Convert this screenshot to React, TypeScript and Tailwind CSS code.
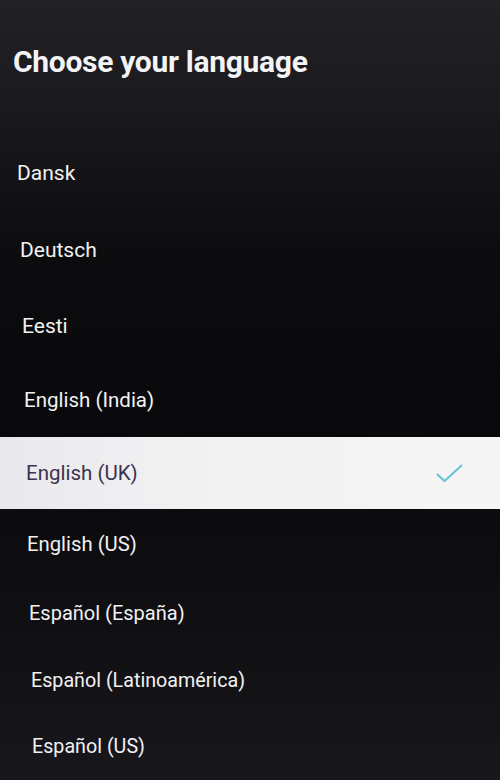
import React from "react";

type Lang = {
  label: string;
  row: string;
  selected?: boolean;
};

// rows get a little shorter and more indented toward the bottom
const languages: Lang[] = [
  { label: "Dansk", row: "h-[78px] pl-[17px] text-[21px]" },
  { label: "Deutsch", row: "h-[76px] pl-[20px] text-[21px]" },
  { label: "Eesti", row: "h-[75px] pl-[22px] text-[21px]" },
  { label: "English (India)", row: "h-[74px] pl-[24px] text-[20.5px]" },
  { label: "English (UK)", row: "h-[72px] pl-[26px] text-[20.5px]", selected: true },
  { label: "English (US)", row: "h-[69px] pl-[27px] text-[20.3px]" },
  { label: "Español (España)", row: "h-[69px] pl-[29px] text-[20px]" },
  { label: "Español (Latinoamérica)", row: "h-[67px] pl-[31px] text-[19.7px]" },
  { label: "Español (US)", row: "h-[65px] pl-[32px] text-[19.7px]" },
];

const Check = () => (
  <svg width="27" height="19" viewBox="0 0 27 19" fill="none">
    <path d="M1.5 10.5 L8.5 17 L25.5 1.5" stroke="#63c3d6" strokeWidth="2" strokeLinecap="round" strokeLinejoin="round" />
  </svg>
);

const App = () => {
  return (
    <div className="w-[500px] h-[780px] overflow-hidden bg-[linear-gradient(180deg,#222126_0%,#1a1a1d_14%,#0c0c0e_33%,#09090b_55%,#0f0f12_78%,#18181c_100%)] font-['Roboto',sans-serif]">
      <div className="h-[134px] pt-[44px] pl-[13px]">
        <h1 className="text-[30px] leading-[36px] font-bold text-[#f4f3f6] tracking-[-0.3px]">
          Choose your language
        </h1>
      </div>
      <ul>
        {languages.map((lang) => (
          <li
            key={lang.label}
            className={`flex items-center justify-between pr-[37px] leading-[24px] ${lang.row} ${
              lang.selected
                ? "bg-[linear-gradient(90deg,#e9e8ec_0%,#f3f2f3_45%,#f6f5f4_100%)] text-[#3b3450]"
                : "text-[#f1f1f3]"
            }`}
          >
            <span>{lang.label}</span>
            {lang.selected && <Check />}
          </li>
        ))}
      </ul>
    </div>
  );
};

export default App;
